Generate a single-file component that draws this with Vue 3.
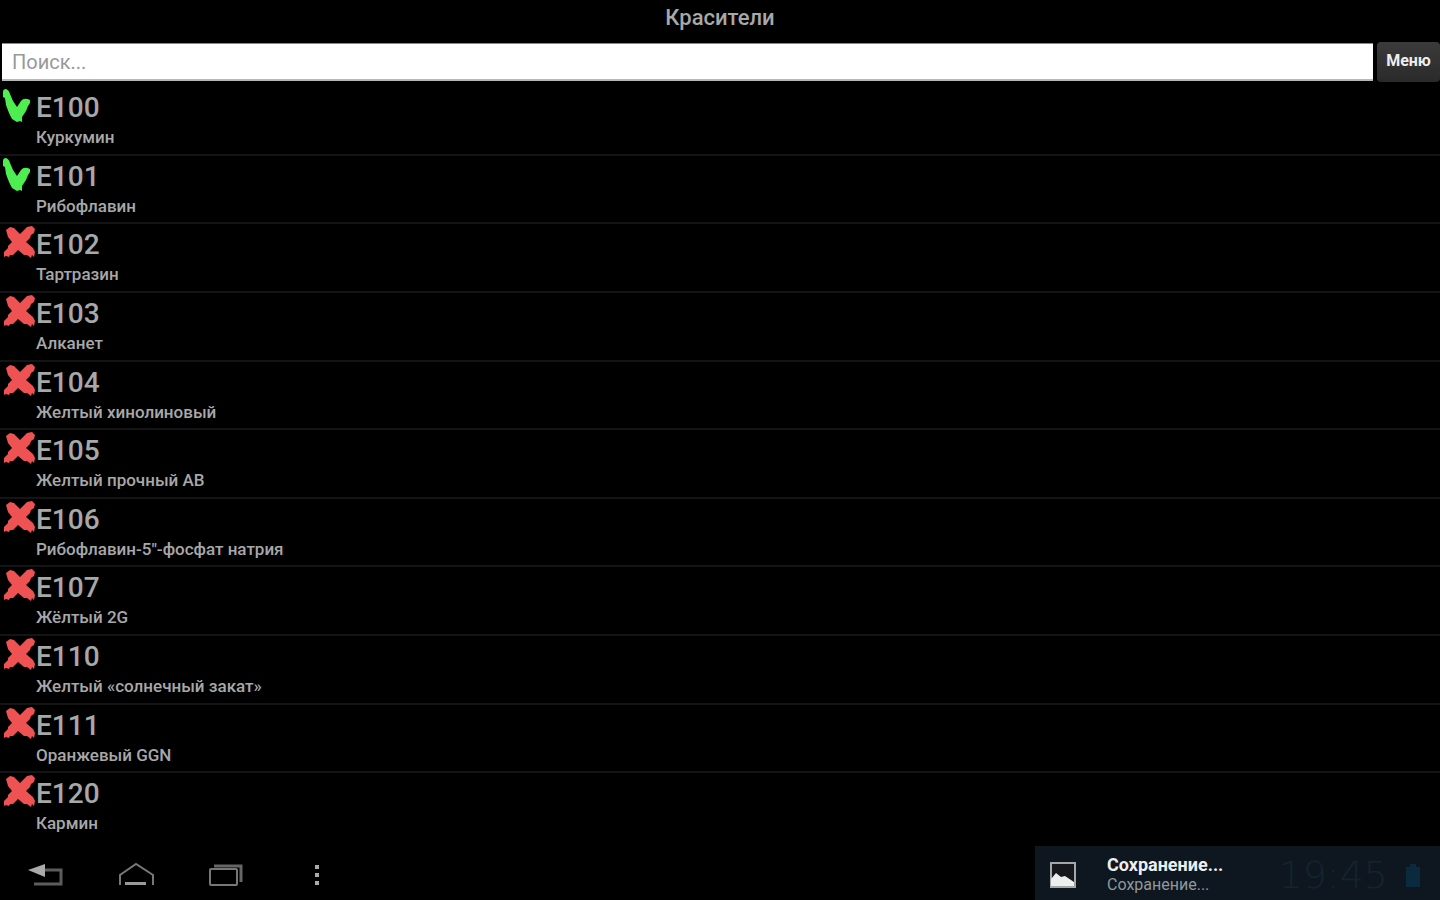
<script setup>
import { ref } from 'vue'

const query = ref('')
const additives = [
  { code: 'E100', name: 'Куркумин', safe: true },
  { code: 'E101', name: 'Рибофлавин', safe: true },
  { code: 'E102', name: 'Тартразин', safe: false },
  { code: 'E103', name: 'Алканет', safe: false },
  { code: 'E104', name: 'Желтый хинолиновый', safe: false },
  { code: 'E105', name: 'Желтый прочный AB', safe: false },
  { code: 'E106', name: 'Рибофлавин-5"-фосфат натрия', safe: false },
  { code: 'E107', name: 'Жёлтый 2G', safe: false },
  { code: 'E110', name: 'Желтый «солнечный закат»', safe: false },
  { code: 'E111', name: 'Оранжевый GGN', safe: false },
  { code: 'E120', name: 'Кармин', safe: false }
]
</script>

<template>
  <div class="screen">
    <h1 class="title">Красители</h1>
    <form class="search" @submit.prevent>
      <input v-model="query" class="field" type="text" placeholder="Поиск..." aria-label="Поиск" />
      <button class="menu" type="button">Меню</button>
    </form>
    <ul class="list">
      <li v-for="item in additives" :key="item.code" class="row">
        <svg v-if="item.safe" class="mark" viewBox="0 0 36 36" aria-hidden="true">
          <path d="M3 4 Q3 1 6 1 Q9 2 10 6 L13 13 L17 19 L21 13 Q24 9 30 12 L30 15 L28 18 L26 23 L22 29 L22 34 L20 33 L17 34 L12 31 L9 25 L6 17 L5 10 L3 9Z" fill="#4fee50" />
        </svg>
        <svg v-else class="mark" viewBox="0 0 36 36" aria-hidden="true">
          <path d="M6 5 L10 2 L14 3 L20 9 L27 2 L32 1 L35 4 L34 8 L31 10 L30 13 L26 17 L33 23 L35 27 L34 32 L32 30 L31 33 L27 30 L24 30 L18 25 L13 30 L10 30 L9 32 L6 31 L4 32 L4 27 L8 23 L8 21 L12 17 L8 12Z" fill="#ee5253" />
        </svg>
        <div class="info">
          <span class="code">{{ item.code }}</span>
          <span class="name">{{ item.name }}</span>
        </div>
      </li>
    </ul>
    <footer class="system">
      <nav class="nav">
        <button type="button" aria-label="Назад">
          <svg viewBox="0 0 40 32" aria-hidden="true">
            <path d="M18 11 H35 V25 H8" fill="none" stroke="#5c5c5c" stroke-width="3" />
            <path d="M2 11 L19 5 V18Z" fill="#aaa" />
          </svg>
        </button>
        <button type="button" aria-label="Домой">
          <svg viewBox="0 0 40 32" aria-hidden="true">
            <path d="M4 26 V16 L20 5 L37 16 V26" fill="none" stroke="#777" stroke-width="2" />
            <path d="M9 24.500 H30" stroke="#999" stroke-width="3" />
          </svg>
        </button>
        <button type="button" aria-label="Недавние">
          <svg viewBox="0 0 40 32" aria-hidden="true">
            <path d="M8 7 H35 V23" fill="none" stroke="#666" stroke-width="3" />
            <rect x="4" y="10" width="27" height="16" rx="1" fill="none" stroke="#777" stroke-width="2" />
          </svg>
        </button>
        <button type="button" aria-label="Ещё">
          <svg viewBox="0 0 40 32" aria-hidden="true">
            <path d="M19 6h4v4h-4z M19 14h4v4h-4z M19 22h4v4h-4z" fill="#aaa" />
          </svg>
        </button>
      </nav>
      <section class="notice">
        <svg class="picture" viewBox="0 0 26 26" aria-hidden="true">
          <rect x="1" y="1" width="24" height="24" fill="#15191d" stroke="#a5a8aa" stroke-width="2" />
          <path d="M1 24 V17 L6 11 L11 15 L15 14 L24 20 V24Z" fill="#eee" />
        </svg>
        <div class="message">
          <strong>Сохранение...</strong>
          <span>Сохранение...</span>
        </div>
        <time class="clock">19:45</time>
        <svg class="battery" viewBox="0 0 14 24" aria-hidden="true">
          <path d="M4 1h6v3h4v20H0V4h4z" fill="#0b2a3d" />
        </svg>
      </section>
    </footer>
  </div>
</template>

<style>
body {
  background: #000;
}
</style>

<style scoped>
.screen {
  display: flex;
  flex-direction: column;
  min-height: 100vh;
  background: #000;
  color: #a8a8a8;
  font-family: Roboto, "Noto Sans", sans-serif;
}
.title {
  margin: 0;
  padding: 4px 0 10px;
  font-size: 22px;
  font-weight: 500;
  line-height: 28px;
  text-align: center;
}
.search {
  display: flex;
  gap: 4px;
  height: 40px;
}
.field {
  flex: 1;
  min-width: 0;
  margin: 1px 0 1px 2px;
  padding: 0 10px;
  border: 0;
  border-bottom: 2px solid #b8b8b8;
  border-top: 1px solid #888;
  background: #fff;
  color: #222;
  font: 20px Roboto, "Noto Sans", sans-serif;
}
.field::placeholder {
  color: #999;
  opacity: 1;
}
.menu {
  width: 63px;
  padding: 0 0 4px;
  border: 0;
  border-radius: 4px;
  background: linear-gradient(#3b3b3b, #2a2a2a);
  color: #eee;
  font: 700 16px Roboto, "Noto Sans", sans-serif;
}
.list {
  flex: 1;
  display: grid;
  grid-auto-rows: 1fr;
  margin: 0;
  padding: 5px 0 4px;
  list-style: none;
}
.row {
  display: flex;
  border-bottom: 2px solid #141414;
}
.row:last-child {
  border-bottom-color: transparent;
}
.mark {
  flex: none;
  width: 36px;
  height: 36px;
  margin-top: 1px;
}
.info {
  display: flex;
  flex-direction: column;
  padding-top: 3px;
}
.code {
  font-size: 28px;
  font-weight: 500;
  line-height: 36px;
}
.name {
  font-size: 17px;
  font-weight: 500;
  line-height: 22px;
}
.system {
  display: flex;
  justify-content: space-between;
  height: 54px;
}
.nav {
  display: flex;
  align-items: center;
  gap: 50px;
  padding: 4px 0 0 26px;
}
.nav button {
  display: flex;
  padding: 0;
  border: 0;
  background: none;
}
.nav svg {
  width: 40px;
  height: 32px;
}
.notice {
  display: flex;
  align-items: center;
  box-sizing: border-box;
  width: 405px;
  padding: 4px 20px 0 15px;
  background: #0e171f;
}
.picture {
  width: 26px;
  height: 26px;
}
.message {
  display: flex;
  flex: 1;
  flex-direction: column;
  padding-left: 31px;
  font-size: 16px;
  line-height: 20px;
  color: #92979b;
}
.message strong {
  color: #eee;
  font-size: 18px;
  font-weight: 700;
}
.clock {
  color: #122430;
  font: 200 38px "DejaVu Sans", sans-serif;
}
.battery {
  width: 14px;
  height: 24px;
  margin-left: 18px;
}
</style>
